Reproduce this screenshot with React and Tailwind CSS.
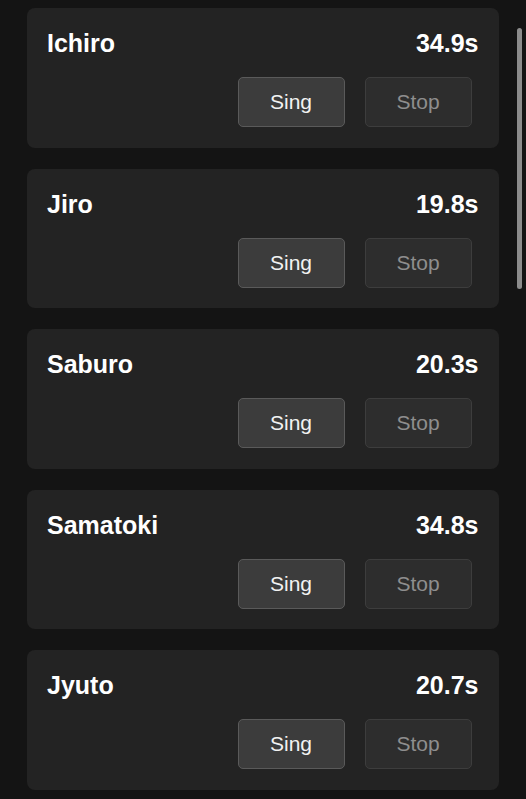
import React from "react";

const singers = [
  { name: "Ichiro", time: "34.9s" },
  { name: "Jiro", time: "19.8s" },
  { name: "Saburo", time: "20.3s" },
  { name: "Samatoki", time: "34.8s" },
  { name: "Jyuto", time: "20.7s" },
];

const SingerCard = ({ name, time }) => {
  return (
    <div className="h-[139.5px] shrink-0 rounded-lg bg-[#232323] px-5 pt-[21px]">
      {/* Header */}
      <div className="flex h-[29px] items-center justify-between text-[25px] font-bold leading-[29px] text-white">
        <span>{name}</span>
        <span>{time}</span>
      </div>

      {/* Buttons */}
      <div className="mt-[19px] flex justify-end gap-5 pr-[7px]">
        <button className="h-[50px] w-[107px] rounded-[5px] border border-[#5a5a5a] bg-[#3c3c3c] text-[21px] text-[#f2f2f2]">
          Sing
        </button>
        <button
          disabled
          className="h-[50px] w-[107px] rounded-[5px] border border-[#3d3d3d] bg-[#2d2d2d] text-[21px] text-[#8e8e8e]"
        >
          Stop
        </button>
      </div>
    </div>
  );
};

export default function App() {
  return (
    <div
      className="relative h-screen overflow-hidden bg-[#141414]"
      style={{ fontFamily: '"Liberation Sans", Arial, sans-serif' }}
    >
      <div className="flex flex-col gap-[21px] pl-[27px] pr-[27.5px] pt-2">
        {singers.map((s) => (
          <SingerCard key={s.name} name={s.name} time={s.time} />
        ))}
      </div>

      {/* Scrollbar thumb */}
      <div className="absolute left-[517px] top-[28px] h-[261px] w-[5px] rounded-full bg-[#8c8c8c]" />
    </div>
  );
}
